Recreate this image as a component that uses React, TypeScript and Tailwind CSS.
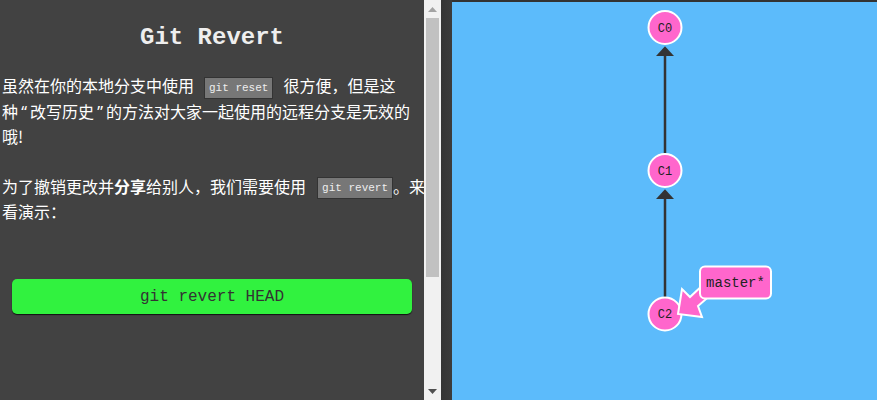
import React from "react";

const cjk = { fontFamily: '"Noto Sans CJK SC", "Noto Sans", sans-serif' };
const mono = { fontFamily: '"Liberation Mono", "Courier New", monospace' };

function Code({ children, className }: { children: React.ReactNode; className?: string }) {
  return (
    <span
      className={
        "inline-block align-middle h-[22px] leading-[20px] px-[4px] bg-[#777777] border border-[#333333] text-[11px] text-[#eeeeee] " +
        (className || "")
      }
      style={mono}
    >
      {children}
    </span>
  );
}

function Q({ children }: { children: React.ReactNode }) {
  return (
    <span className="inline-block w-[12px] text-center" style={{ fontFamily: '"Noto Sans", sans-serif' }}>
      {children}
    </span>
  );
}

function Node({ cy, label }: { cy: number; label: string }) {
  return (
    <g>
      <circle cx={213} cy={cy} r={16.5} fill="#ff66cc" stroke="#ffffff" strokeWidth={2} />
      <text
        x={213}
        y={cy + 1}
        textAnchor="middle"
        dominantBaseline="middle"
        fontSize={12}
        fill="#222"
        style={mono}
      >
        {label}
      </text>
    </g>
  );
}

export default function App() {
  return (
    <div className="flex w-[877px] h-[400px] bg-[#3a3a3a] overflow-hidden">
      <div className="w-[424px] shrink-0 bg-[#424242] text-white" style={cjk}>
        <div
          className="mt-[22px] h-[32px] leading-[32px] text-center text-[24px] font-bold text-[#eeeeee]"
          style={mono}
        >
          Git Revert
        </div>
        <div className="mt-[19px] pl-[2px] text-[16px] leading-[24px] whitespace-nowrap">
          <div>
            虽然在你的本地分支中使用<Code className="ml-[10px] mr-[10px]">git reset</Code>很方便，但是这
          </div>
          <div>
            种<Q>“</Q>改写历史<Q>”</Q>的方法对大家一起使用的远程分支是无效的
          </div>
          <div>哦!</div>
        </div>
        <div className="mt-[26px] pl-[2px] text-[16px] leading-[24px] whitespace-nowrap">
          <div>
            为了撤销更改并<b>分享</b>给别人，我们需要使用<Code className="ml-[11px]">git revert</Code>。来
          </div>
          <div>看演示：</div>
        </div>
        <div
          className="mt-[56px] mx-[12px] h-[35px] rounded-[5px] bg-[#31f23f] shadow-[0_1px_1px_#111111] flex items-center justify-center text-[16px] text-[#333333]"
          style={mono}
        >
          git revert HEAD
        </div>
      </div>
      <div className="w-[17px] shrink-0 bg-[#f1f1f1] flex flex-col items-center">
        <div className="h-[18px] flex items-center justify-center">
          <svg width="9" height="5" viewBox="0 0 9 5">
            <polygon points="0,5 4.5,0 9,5" fill="#a3a3a3" />
          </svg>
        </div>
        <div className="w-[13px] h-[259px] bg-[#c1c1c1]" />
        <div className="flex-1" />
        <div className="h-[18px] flex items-center justify-center">
          <svg width="9" height="5" viewBox="0 0 9 5">
            <polygon points="0,0 9,0 4.5,5" fill="#505050" />
          </svg>
        </div>
      </div>
      <div className="w-[11px] shrink-0 bg-gradient-to-r from-[#353535] to-[#3c3c3c]" />
      <div className="flex-1 pt-[2px] bg-[#333333]">
        <div className="h-full bg-[#5cbbfb]">
          <svg width="425" height="398" viewBox="0 0 425 398" className="block">
            <line x1={213} y1={151} x2={213} y2={53} stroke="#333" strokeWidth={2.5} />
            <polygon points="213,44.3 204,54 222,54" fill="#333" />
            <line x1={213} y1={295} x2={213} y2={196} stroke="#333" strokeWidth={2.5} />
            <polygon points="213,187.3 204,197 222,197" fill="#333" />
            <Node cy={25.5} label="C0" />
            <Node cy={168.5} label="C1" />
            <Node cy={312} label="C2" />
            <polygon
              points="226,312 230,287 238,295 252,282 261,291 246,304 250,315"
              fill="#ff66cc"
              stroke="#ffffff"
              strokeWidth={2}
              strokeLinejoin="miter"
            />
            <rect x={248} y={264.5} width={71} height={32} rx={5} fill="#ff66cc" stroke="#ffffff" strokeWidth={2} />
            <text
              x={283.5}
              y={281}
              textAnchor="middle"
              dominantBaseline="middle"
              fontSize={14}
              fill="#222"
              style={mono}
            >
              master*
            </text>
          </svg>
        </div>
      </div>
    </div>
  );
}
